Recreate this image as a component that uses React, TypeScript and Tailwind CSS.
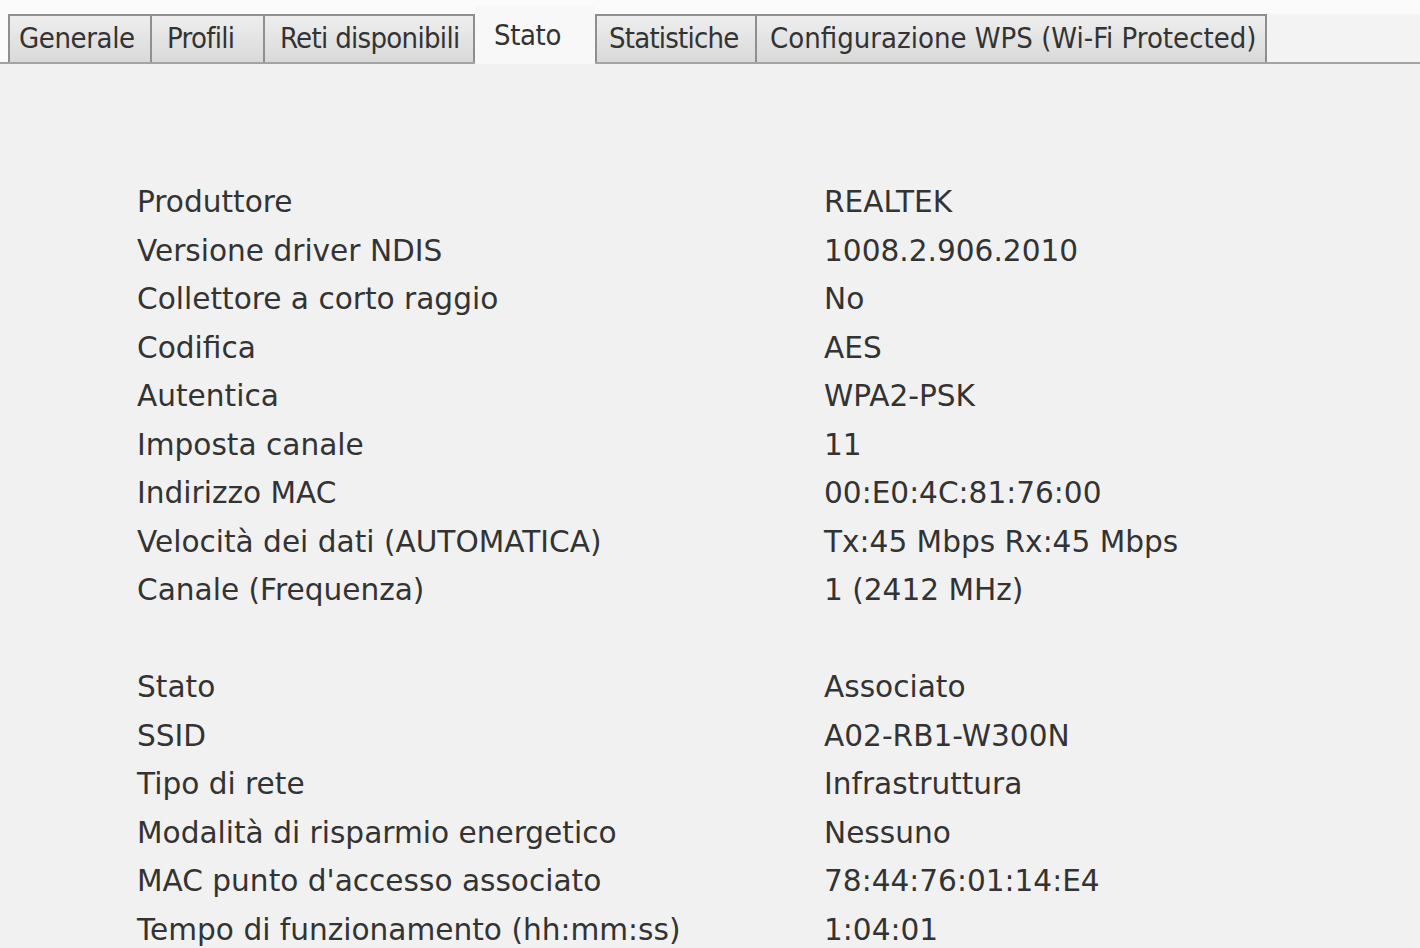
import React from 'react'

type Tab = {
  label: string
  cls: string
  active?: boolean
}

// widths include the tab borders, positions follow the screenshot
const tabs: Tab[] = [
  { label: 'Generale', cls: 'w-[144px] pl-[9px] border-l-2 tracking-[-0.4px]' },
  { label: 'Profili', cls: 'w-[113px] pl-[15px] tracking-[-0.7px]' },
  { label: 'Reti disponibili', cls: 'w-[210px] pl-[15px] tracking-[-0.7px]' },
  { label: 'Stato', cls: 'w-[120px] pl-[19px] tracking-[-0.4px]', active: true },
  { label: 'Statistiche', cls: 'w-[162px] pl-[12px] border-l-2 tracking-[-0.8px]' },
  { label: 'Configurazione WPS (Wi-Fi Protected)', cls: 'w-[510px] pl-[13px]' },
]

const info: [string, string][] = [
  ['Produttore', 'REALTEK'],
  ['Versione driver NDIS', '1008.2.906.2010'],
  ['Collettore a corto raggio', 'No'],
  ['Codifica', 'AES'],
  ['Autentica', 'WPA2-PSK'],
  ['Imposta canale', '11'],
  ['Indirizzo MAC', '00:E0:4C:81:76:00'],
  ['Velocità dei dati (AUTOMATICA)', 'Tx:45 Mbps Rx:45 Mbps'],
  ['Canale (Frequenza)', '1 (2412 MHz)'],
]

const stato: [string, string][] = [
  ['Stato', 'Associato'],
  ['SSID', 'A02-RB1-W300N'],
  ['Tipo di rete', 'Infrastruttura'],
  ['Modalità di risparmio energetico', 'Nessuno'],
  ['MAC punto d\'accesso associato', '78:44:76:01:14:E4'],
  ['Tempo di funzionamento (hh:mm:ss)', '1:04:01'],
]

function Rows({ rows }: { rows: [string, string][] }) {
  return (
    <div className="grid grid-cols-[687px_1fr]">
      {rows.map(([k, v]) => (
        <React.Fragment key={k}>
          <div className="leading-[48.5px] whitespace-nowrap">{k}</div>
          <div className="leading-[48.5px] whitespace-nowrap">{v}</div>
        </React.Fragment>
      ))}
    </div>
  )
}

export default function App() {
  return (
    <div className="w-[1420px] h-[948px] overflow-hidden bg-[#f1f1f1] text-[#333333]">
      {/* tab strip */}
      <div className="bg-[#fbfbfb] pt-[14px] pl-[8px] flex items-end border-b-2 border-[#a3a3a3] h-[64px]">
        {tabs.map(t =>
          t.active ? (
            <div
              key={t.label}
              className={`${t.cls} h-[58px] -mb-[2px] bg-[#f8f8f8] pt-[8px] text-[29px] [font-family:'DejaVu_Sans_Condensed','DejaVu_Sans',sans-serif]`}
            >
              {t.label}
            </div>
          ) : (
            <div
              key={t.label}
              className={`${t.cls} h-[48px] shrink-0 flex items-center whitespace-nowrap border-t-2 border-r-2 border-[#8f8f8f] bg-gradient-to-b from-[#eeeeee] to-[#d9d9d9] text-[29px] [font-family:'DejaVu_Sans_Condensed','DejaVu_Sans',sans-serif]`}
            >
              {t.label}
            </div>
          )
        )}
        <div className="flex-1 h-[48px] bg-[#f3f3f3]" />
      </div>

      {/* status panel */}
      <div className="pl-[137px] pt-[114px] text-[29.6px] [font-family:'DejaVu_Sans',sans-serif]">
        <Rows rows={info} />
        <div className="h-[48.5px]" />
        <Rows rows={stato} />
      </div>
    </div>
  )
}
